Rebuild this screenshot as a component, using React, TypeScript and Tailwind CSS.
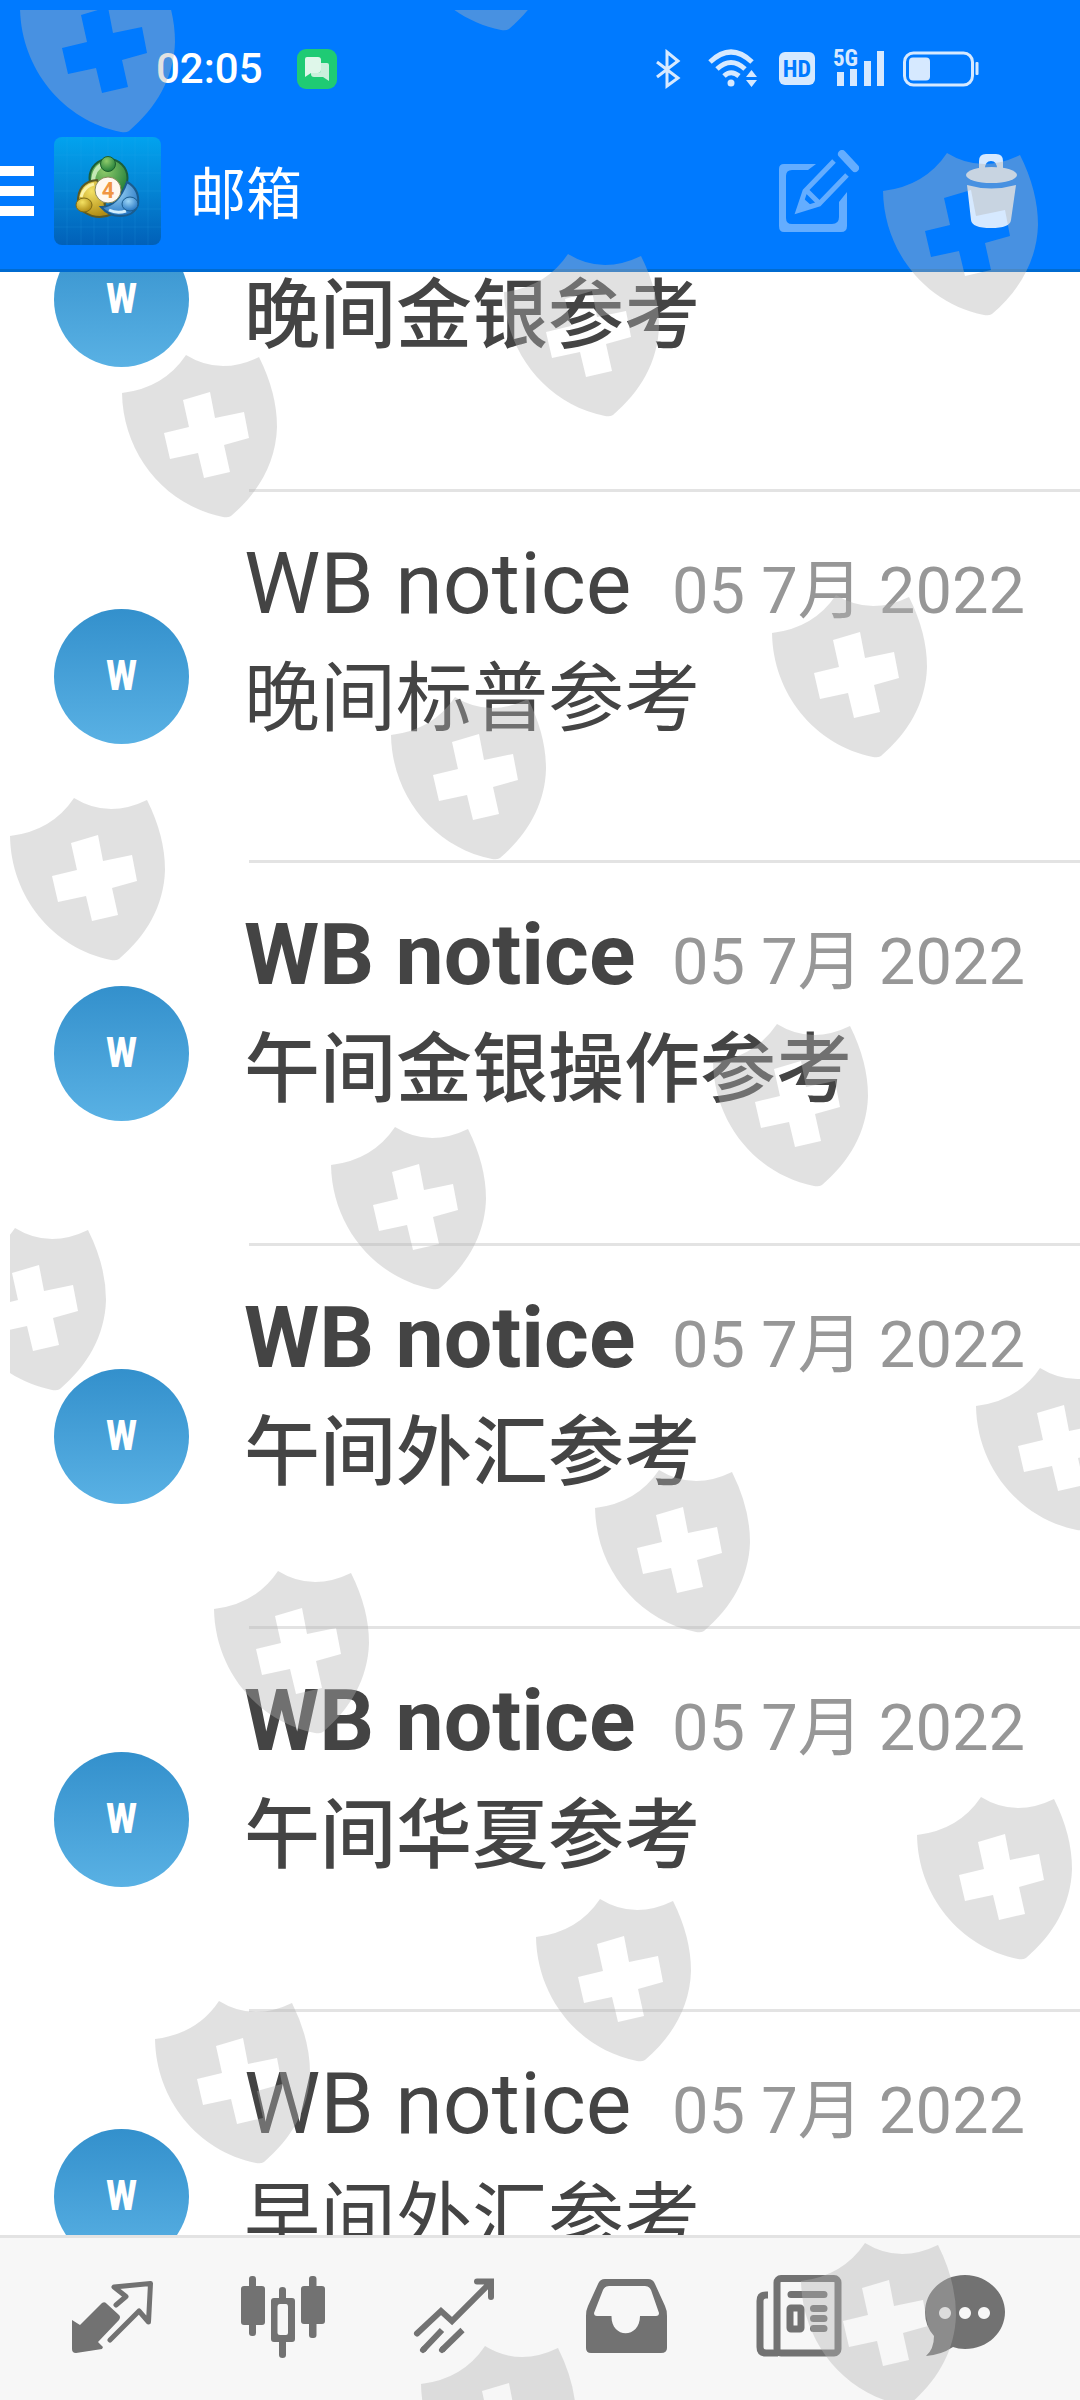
import React from "react";

type Mail = { subject: string; unread: boolean };

const mails: Mail[] = [
  { subject: "晚间金银参考", unread: true },
  { subject: "晚间标普参考", unread: false },
  { subject: "午间金银操作参考", unread: true },
  { subject: "午间外汇参考", unread: true },
  { subject: "午间华夏参考", unread: true },
  { subject: "早间外汇参考", unread: false },
];

const shields: [number, number][] = [
  [20, -30], [400, -132],
  [883, 153], [504, 254], [122, 355],
  [772, 595], [391, 697], [10, 798],
  [713, 1024], [331, 1127], [-49, 1228],
  [976, 1368], [595, 1470], [214, 1571],
  [917, 1797], [536, 1899], [155, 2001],
  [801, 2243], [421, 2346],
];

function Watermark() {
  return (
    <div className="pointer-events-none absolute inset-0 overflow-hidden pt-[10px] pl-[10px]" aria-hidden="true">
      <svg className="block h-full w-full" fill="rgb(180 180 180 / 0.4)">
        {shields.map(([x, y]) => (
          <path
            key={`${x},${y}`}
            transform={`translate(${x - 10} ${y - 10})`}
            fillRule="evenodd"
            d="M0 38Q42 33 64 0Q98 21 137 2Q155 38 155 72C154 108 136 138 109 161Q106 163 101 162C42 150 1 98 0 38ZM61 45L67 72L42 78L48 104L76 98L82 123L108 117L102 90L127 83L122 57L93 63L88 37Z"
          />
        ))}
      </svg>
    </div>
  );
}

function StatusBar() {
  return (
    <div className="flex h-[137px] items-center pr-[101px] pl-[156px] text-[#d6e9ff]">
      <span className="text-[42px] leading-none font-medium text-white">02:05</span>
      <svg className="ml-[34px] h-[40px] w-[40px]" viewBox="0 0 40 40">
        <rect width="40" height="40" rx="9" fill="#1fcb74" />
        <path d="M10 8h11q3 0 3 3v10q0 3-3 3h-7l-6 4V10q0-2 2-2Z" fill="#dff7ea" />
        <path d="M24 14h6q2 0 2 2v16l-6-4h-9q-3 0-3-3v-1h7q3 0 3-3Z" fill="#c9f0dc" />
      </svg>
      <div className="ml-auto flex items-center gap-[18px]">
        <svg className="h-[40px] w-[34px]" viewBox="0 0 34 40" fill="none" stroke="currentColor" strokeWidth="3" strokeLinejoin="miter">
          <path d="M1 13L22 29L11 37V3L22 12L1 28" />
        </svg>
        <svg className="h-[40px] w-[53px]" viewBox="0 0 53 40" fill="none" stroke="currentColor" strokeWidth="5">
          <path d="M2 13Q23 -7 44 13M9 20Q23 7 37 20M16 27Q23 20.500 31 27" />
          <circle cx="23" cy="34" r="3.500" fill="currentColor" stroke="none" />
          <path d="M38 28L43.500 21L49 28ZM38 31L43.500 38L49 31Z" fill="currentColor" stroke="none" />
        </svg>
        <span className="flex h-[33px] w-[36px] items-center justify-center rounded-[6px] bg-[#d6e9ff] font-['Roboto_Condensed','Liberation_Sans_Narrow',Roboto,sans-serif] text-[24px] leading-none font-bold text-[#007aff]">HD</span>
        <svg className="h-[40px] w-[52px] overflow-visible" viewBox="0 0 52 40" fill="currentColor">
          <text x="0" y="17" className="font-['Roboto_Condensed','Liberation_Sans_Narrow',Roboto,sans-serif] text-[23px] font-bold">5G</text>
          <path d="M4 23h7v14H4ZM17 20h7v17h-7ZM31 12h7v25h-7ZM44 2h7v35h-7Z" />
        </svg>
        <svg className="h-[40px] w-[76px]" viewBox="0 0 76 40">
          <rect x="1.500" y="4" width="68" height="32" rx="9" fill="none" stroke="currentColor" strokeWidth="3" />
          <rect x="6" y="8.500" width="21" height="23" rx="4" fill="currentColor" />
          <rect x="72.500" y="13" width="3" height="13" rx="1" fill="currentColor" />
        </svg>
      </div>
    </div>
  );
}

function AppLogo() {
  return (
    <svg className="h-[108px] w-[107px]" viewBox="0 0 107 108">
      <defs>
        <linearGradient id="tile" x1="0" y1="0" x2="0" y2="1">
          <stop offset="0" stopColor="#02a3ee" />
          <stop offset="0.500" stopColor="#0484d4" />
          <stop offset="1" stopColor="#0160b8" />
        </linearGradient>
        <radialGradient id="green" cx="0.400" cy="0.300" r="0.700">
          <stop offset="0" stopColor="#8fcb6a" />
          <stop offset="1" stopColor="#24803a" />
        </radialGradient>
        <radialGradient id="gold" cx="0.400" cy="0.300" r="0.700">
          <stop offset="0" stopColor="#f4e163" />
          <stop offset="1" stopColor="#b08c14" />
        </radialGradient>
        <radialGradient id="sky" cx="0.400" cy="0.300" r="0.700">
          <stop offset="0" stopColor="#9dd6f7" />
          <stop offset="1" stopColor="#2878c4" />
        </radialGradient>
      </defs>
      <rect width="107" height="108" rx="8" fill="url(#tile)" />
      <path d="M13 0v108M27 0v108M40 0v108M54 0v108M68 0v108M81 0v108M94 0v108M0 18h107M0 36h107M0 54h107M0 72h107M0 90h107" stroke="#3cb6ef" strokeOpacity="0.150" fill="none" />
      <circle cx="54.500" cy="41" r="19" fill="url(#green)" stroke="#1c5f3a" strokeWidth="2" />
      <path d="M39 46Q39 31 50 27" fill="none" stroke="#c4e8b4" strokeWidth="4" />
      <path d="M24 66Q23 45 43 43L52 62Q47 68 58 77Q44 84 30 75Z" fill="url(#gold)" stroke="#5b5a25" strokeWidth="2" />
      <path d="M27 60Q30 49 40 47" fill="none" stroke="#fbf3a6" strokeWidth="3" />
      <path d="M47 70Q64 70 73 45Q86 52 84 68Q80 79 66 79Q55 79 47 70Z" fill="url(#sky)" stroke="#1b5c8d" strokeWidth="2" />
      <path d="M55 73Q63 77 72 74" fill="none" stroke="#d3eefc" strokeWidth="3" />
      <circle cx="54" cy="27" r="7.500" fill="url(#green)" stroke="#1c5f2a" />
      <ellipse cx="30" cy="68" rx="8" ry="7" fill="url(#gold)" stroke="#7d6a16" />
      <ellipse cx="76" cy="67" rx="8" ry="7" fill="url(#sky)" stroke="#1b5c8d" />
      <circle cx="54" cy="53" r="13" fill="#fff8ef" stroke="#8a8a5a" />
      <text x="54" y="61" textAnchor="middle" className="text-[22px] font-bold" fill="#f09642">4</text>
    </svg>
  );
}

function Toolbar() {
  return (
    <div className="flex h-[132px] items-center pr-[63px] pb-[24px]">
      <button aria-label="菜单" className="flex w-[34px] flex-col gap-[10px]">
        <span className="h-[10px] w-full bg-white" />
        <span className="h-[10px] w-full bg-white" />
        <span className="h-[10px] w-full bg-white" />
      </button>
      <div className="ml-[20px]">
        <AppLogo />
      </div>
      <h1 className="ml-[29px] pt-[8px] text-[56px] leading-none text-white">邮箱</h1>
      <button aria-label="写邮件" className="ml-auto">
        <svg className="h-[82px] w-[80px]" viewBox="0 0 80 82" fill="none" stroke="#64adff" strokeWidth="6">
          <path d="M0 19Q0 14 5 14H37L29 20H13Q7 20 7 26V68Q7 74 13 74H53Q60 74 60 67V52L68 42V76Q68 82 62 82H5Q0 82 0 76Z" fill="#64adff" stroke="none" />
          <path d="M55 11L26 41L19.500 60.500L40 54L68 25M26 39L41 54" strokeWidth="5" />
          <path d="M24 48L33 56L19 61Z" fill="#64adff" stroke="none" />
          <path d="M63 4L76 18" strokeWidth="8" strokeLinecap="round" />
        </svg>
      </button>
      <button aria-label="删除" className="ml-[107px]">
        <svg className="h-[75px] w-[51px]" viewBox="0 0 51 75" fill="#d6e9ff">
          <path fillRule="evenodd" d="M13 16V7Q13 0 20 0H30Q37 0 37 7V16ZM19 15H31Q31 7 25 7T19 15Z" />
          <ellipse cx="25.500" cy="21" rx="25.500" ry="8" />
          <path d="M1 31Q25 38 50 31L45 66Q44 74 25 74T5 66Z" />
        </svg>
      </button>
    </div>
  );
}

function MailRow({ mail }: { mail: Mail }) {
  return (
    <li>
      <button className="flex w-full items-center pl-[54px] text-left">
        <span className="flex h-[135px] w-[135px] shrink-0 items-center justify-center rounded-full bg-linear-to-b from-[#3390cc] to-[#59b1e4] font-['Roboto_Condensed','Liberation_Sans_Narrow',Roboto,sans-serif] text-[42px] leading-none font-bold text-white">
          W
        </span>
        <span className={`ml-[55px] flex min-w-0 flex-1 flex-col pt-[42px] pr-[55px] text-[#444] ${mail.unread ? "pb-[108px] font-bold" : "pb-[96px]"}`}>
          <span className="flex items-baseline justify-between leading-[100px] whitespace-nowrap">
            <span className="text-[86px]">WB notice</span>
            <span className="text-[65px] leading-[80px] font-normal text-[#979797]">05 7月 2022</span>
          </span>
          <span className={`text-[76px] leading-[130px] whitespace-nowrap ${mail.unread ? "font-medium" : ""}`}>{mail.subject}</span>
        </span>
      </button>
      <div className="ml-[249px] h-[3px] bg-[#e3e3e3]" />
    </li>
  );
}

const navItems: { label: string; icon: React.ReactNode }[] = [
  {
    label: "行情",
    icon: (
      <>
        <path d="M2 48L10 53L32 31Q35 29 37 32L49 43Q51 45 49 48L28 70L33 75L32 77L6 81Q2 81 2 77Z" fill="currentColor" />
        <path d="M46 33L56 24.500L44 15L80.500 11.500L78.500 50L69 39L40 68" fill="none" stroke="currentColor" strokeWidth="5" strokeLinejoin="round" strokeLinecap="round" />
      </>
    ),
  },
  {
    label: "图表",
    icon: (
      <g fill="currentColor">
        <rect x="0" y="14" width="24" height="39" rx="3" />
        <rect x="8" y="4" width="7" height="60" rx="3" />
        <path fillRule="evenodd" d="M33 26H51Q54 26 54 29V67Q54 70 51 70H33Q30 70 30 67V29Q30 26 33 26ZM39 32Q36.500 32 36.500 35V61Q36.500 63 39 63H45Q47 63 47 61V35Q47 32 45 32Z" />
        <path d="M38 27V18Q38 15 41.500 15T45 18V27ZM38 69V83Q38 86 41.500 86T45 83V69Z" />
        <rect x="60" y="14" width="24" height="38" rx="3" />
        <rect x="68" y="4" width="7.500" height="62" rx="3" />
      </g>
    ),
  },
  {
    label: "交易",
    icon: (
      <g fill="none" stroke="currentColor" strokeWidth="6">
        <path d="M5 61.500L29 39L40 49L78 11M65 9.500H79V25" strokeLinecap="round" />
        <path d="M11 78L30 58M30 78L50.500 58" />
        <path d="M11 78L12 77M30 78L31 77" strokeLinecap="round" />
      </g>
    ),
  },
  {
    label: "邮箱",
    icon: (
      <path
        fillRule="evenodd"
        fill="currentColor"
        d="M22 7H65Q70 7 72 12L82 34Q84 38 84 44V76Q84 81 78 81H8Q3 81 3 76V44Q3 38 5 34L15 12Q17 7 22 7ZM26 14Q22 14 20 18L11 41Q11 44 14 44H28.500C28 67 57 67 57 44H73Q76 44 76 41L68 18Q66 14 62 14Z"
      />
    ),
  },
  {
    label: "新闻",
    icon: (
      <g fill="none" stroke="currentColor" strokeWidth="7">
        <rect x="23" y="6.500" width="61" height="74.500" rx="4" />
        <path d="M14 23H12Q6 23 6 29V75Q6 81 12 81H24" />
        <path d="M37 22.500H70M59.500 36.500H70M59.500 46.500H70M59.500 56.500H70" strokeLinecap="round" />
        <rect x="36" y="36" width="11" height="21" rx="1" />
      </g>
    ),
  },
  {
    label: "聊天",
    icon: (
      <path
        fillRule="evenodd"
        fill="currentColor"
        d="M40 3C62 3 80 20 80 40S63 77 40 77Q33 77 28 75Q16 83 1 84Q9 77 9 64Q0 54 0 40C0 20 17 3 40 3ZM20 35a6 6 0 1 0 .01 0ZM40 35a6 6 0 1 0 .01 0ZM59 35a6 6 0 1 0 .01 0Z"
      />
    ),
  },
];

export default function App() {
  return (
    <div className="relative flex h-screen flex-col overflow-hidden bg-white font-[Roboto,'Noto_Sans_CJK_SC',sans-serif]">
      <header className="shrink-0 border-b-[3px] border-[#006bd0] bg-[#007aff]">
        <StatusBar />
        <Toolbar />
      </header>
      <main className="min-h-0 flex-1 overflow-hidden">
        <ul className="-mt-[163px]">
          {mails.map((mail) => (
            <MailRow key={mail.subject} mail={mail} />
          ))}
        </ul>
      </main>
      <nav className="flex h-[165px] shrink-0 items-start border-t-[3px] border-[#e3e3e3] bg-[#f7f7f7] px-[27px] pt-[34px] text-[#727272]">
        {navItems.map((item) => (
          <button key={item.label} aria-label={item.label} className="flex flex-1 justify-center">
            <svg className="h-[86px] w-[86px] overflow-visible" viewBox="0 0 86 86">
              {item.icon}
            </svg>
          </button>
        ))}
      </nav>
      <Watermark />
    </div>
  );
}
